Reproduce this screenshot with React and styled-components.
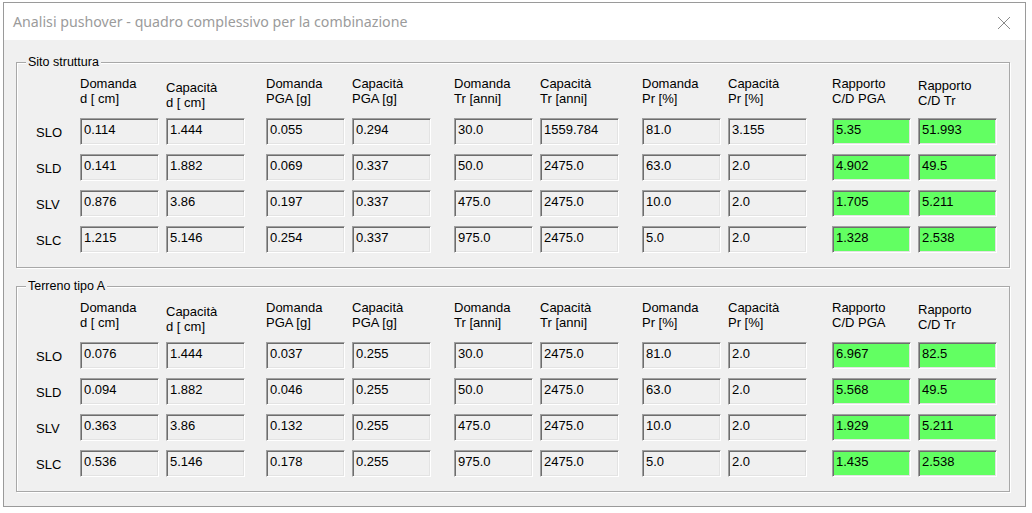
import React from "react";
import styled, { createGlobalStyle } from "styled-components";

const Global = createGlobalStyle`
  html, body { margin: 0; padding: 0; background: #ffffff; }
  body { font-family: "Liberation Sans", Arial, sans-serif; }
`;

const Window = styled.div`
  box-sizing: border-box;
  margin: 2px 0 0 3px;
  width: 1023px;
  height: 505px;
  border: 1px solid #9a9a9a;
  background: #f0f0f0;
  display: flex;
  flex-direction: column;
`;

const TitleBar = styled.div`
  height: 37px;
  background: #ffffff;
  display: flex;
  align-items: center;
  justify-content: space-between;
  padding: 0 14px 0 9px;
  flex-shrink: 0;
`;

const Title = styled.span`
  font-family: "Noto Sans", "Open Sans", sans-serif;
  font-size: 14.2px;
  color: #9b9b9b;
`;

const CloseButton = styled.div`
  width: 14px;
  height: 14px;
  display: flex;
  margin-top: 2px;
`;

const Body = styled.div`
  flex: 1;
  padding: 22px 15px 0 12px;
  display: flex;
  flex-direction: column;
  gap: 18px;
`;

const Group = styled.div`
  position: relative;
  border: 1px solid #a8a8a8;
  box-shadow: 1px 1px 0 #ffffff, inset 1px 1px 0 #ffffff;
  padding: 13px 0 14px 19px;
`;

const Legend = styled.span`
  position: absolute;
  top: -8px;
  left: 9px;
  padding: 0 2px;
  background: #f0f0f0;
  font-size: 12.5px;
  line-height: 15px;
  color: #000;
`;

const Table = styled.div`
  display: grid;
  grid-template-columns: 44px 86px 100px 86px 102px 86px 102px 86px 104px 86px 86px;
  grid-template-rows: 33px repeat(4, 27px);
  row-gap: 9px;
`;

const HeaderCell = styled.div`
  font-size: 13px;
  line-height: 15px;
  color: #000;
  padding-top: ${(p) => p.$offset || 0}px;
  white-space: nowrap;
`;

const RowLabel = styled.div`
  font-size: 13px;
  line-height: 15px;
  color: #000;
  display: flex;
  align-items: center;
  padding-top: 1px;
`;

const Field = styled.div`
  box-sizing: border-box;
  width: 79px;
  height: 27px;
  border: 1px solid;
  border-color: #a0a0a0 #ffffff #ffffff #a0a0a0;
  box-shadow: inset 1px 1px 0 #6d6d6d, inset -1px -1px 0 #e3e3e3;
  background: ${(p) => (p.$ok ? "#62ff62" : "#f0f0f0")};
  font-size: 13px;
  line-height: 15px;
  color: #000;
  padding: 3px 0 0 3px;
  white-space: nowrap;
  overflow: hidden;
`;

const headers = [
  ["Domanda", "d [ cm]", 0],
  ["Capacità", "d [ cm]", 4],
  ["Domanda", "PGA [g]", 0],
  ["Capacità", "PGA [g]", 0],
  ["Domanda", "Tr [anni]", 0],
  ["Capacità", "Tr [anni]", 0],
  ["Domanda", "Pr [%]", 0],
  ["Capacità", "Pr [%]", 0],
  ["Rapporto", "C/D PGA", 0],
  ["Rapporto", "C/D Tr", 2],
];

const groups = [
  {
    title: "Sito struttura",
    rows: [
      ["SLO", ["0.114", "1.444", "0.055", "0.294", "30.0", "1559.784", "81.0", "3.155", "5.35", "51.993"]],
      ["SLD", ["0.141", "1.882", "0.069", "0.337", "50.0", "2475.0", "63.0", "2.0", "4.902", "49.5"]],
      ["SLV", ["0.876", "3.86", "0.197", "0.337", "475.0", "2475.0", "10.0", "2.0", "1.705", "5.211"]],
      ["SLC", ["1.215", "5.146", "0.254", "0.337", "975.0", "2475.0", "5.0", "2.0", "1.328", "2.538"]],
    ],
  },
  {
    title: "Terreno tipo A",
    rows: [
      ["SLO", ["0.076", "1.444", "0.037", "0.255", "30.0", "2475.0", "81.0", "2.0", "6.967", "82.5"]],
      ["SLD", ["0.094", "1.882", "0.046", "0.255", "50.0", "2475.0", "63.0", "2.0", "5.568", "49.5"]],
      ["SLV", ["0.363", "3.86", "0.132", "0.255", "475.0", "2475.0", "10.0", "2.0", "1.929", "5.211"]],
      ["SLC", ["0.536", "5.146", "0.178", "0.255", "975.0", "2475.0", "5.0", "2.0", "1.435", "2.538"]],
    ],
  },
];

function GroupBox({ group }) {
  return (
    <Group>
      <Legend>{group.title}</Legend>
      <Table>
        <div />
        {headers.map(([a, b, off], i) => (
          <HeaderCell key={i} $offset={off}>
            {a}
            <br />
            {b}
          </HeaderCell>
        ))}
        {group.rows.map(([label, values]) => (
          <React.Fragment key={label}>
            <RowLabel>{label}</RowLabel>
            {values.map((v, i) => (
              <Field key={i} $ok={i >= 8}>
                {v}
              </Field>
            ))}
          </React.Fragment>
        ))}
      </Table>
    </Group>
  );
}

export default function App() {
  return (
    <>
      <Global />
      <Window>
        <TitleBar>
          <Title>Analisi pushover - quadro complessivo per la combinazione</Title>
          <CloseButton>
            <svg width="14" height="14" viewBox="0 0 14 14">
              <path d="M1 1 L13 13 M13 1 L1 13" stroke="#8a8a8a" strokeWidth="1" fill="none" />
            </svg>
          </CloseButton>
        </TitleBar>
        <Body>
          {groups.map((g) => (
            <GroupBox key={g.title} group={g} />
          ))}
        </Body>
      </Window>
    </>
  );
}
